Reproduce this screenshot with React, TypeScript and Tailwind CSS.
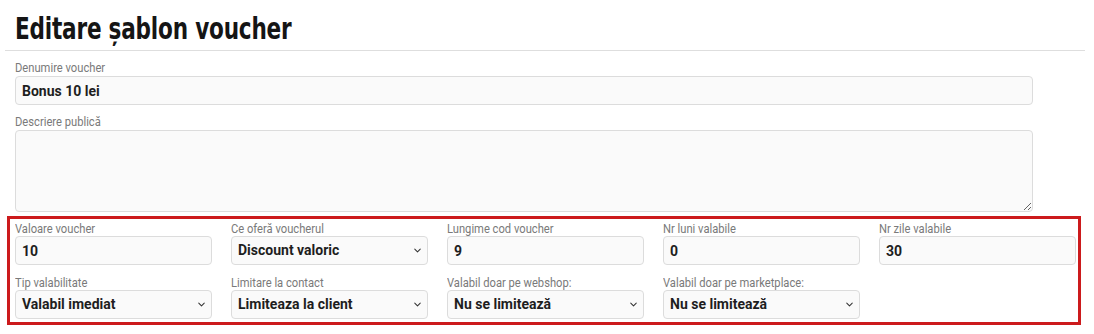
import { ChevronDown } from "lucide-react";

const labelCls =
  "inline-block origin-left scale-x-[0.86] whitespace-nowrap text-[13px] leading-[14px] font-normal text-[#7a7a7a] font-['Roboto','Liberation_Sans',sans-serif]";
const boxCls =
  "h-[29px] w-full rounded-[4px] border border-[#dcdcdc] bg-[#fafafa] px-[6px] text-[14px] font-bold text-[#1e1e1e] font-['Roboto','Liberation_Sans',sans-serif] outline-none";

const Label = ({ children }: { children: string }) => (
  <div className="h-[14px] leading-[14px]">
    <label className={labelCls}>{children}</label>
  </div>
);

const TextField = ({ label, value }: { label: string; value: string }) => (
  <div className="w-full">
    <Label>{label}</Label>
    <input readOnly value={value} className={`${boxCls} mt-[2px] block`} />
  </div>
);

const SelectField = ({ label, value }: { label: string; value: string }) => (
  <div className="w-full">
    <Label>{label}</Label>
    <div className={`${boxCls} mt-[2px] flex items-center justify-between pr-[4px]`}>
      <span>{value}</span>
      <ChevronDown size={11} strokeWidth={2.2} className="text-[#333]" />
    </div>
  </div>
);

export default function App() {
  return (
    <div className="bg-white w-[1094px] h-[334px] overflow-hidden">
      <div className="ml-[5px] w-[1080px] border-b border-[#dedede] pl-[10px] pt-[9px] pb-[1px]">
        <h1 className="h-[40px] leading-[40px] whitespace-nowrap">
          <span className="inline-block origin-left scale-x-[0.72] text-[30px] font-bold text-[#151515] font-['DejaVu_Sans',sans-serif] tracking-[-0.3px]">
            Editare șablon voucher
          </span>
        </h1>
      </div>

      <div className="ml-[15px] w-[1018px] pt-[8px] flex flex-col gap-[8px]">
        <div>
          <Label>Denumire voucher</Label>
          <input readOnly value="Bonus 10 lei" className={`${boxCls} mt-[3px] block`} />
        </div>
        <div>
          <Label>Descriere publică</Label>
          <textarea readOnly className="mt-[3px] block h-[82px] w-full rounded-[4px] border border-[#dcdcdc] bg-[#fafafa] outline-none" />
        </div>
      </div>

      {/* Highlighted block */}
      <div className="mt-[4px] ml-[7px] w-[1074px] h-[109px] border-[3px] border-[#cc1a1c] pl-[5px] pr-[2px] pt-[1px]">
        <div className="grid grid-cols-5 gap-x-[19px] gap-y-[9px]">
          <TextField label="Valoare voucher" value="10" />
          <SelectField label="Ce oferă voucherul" value="Discount valoric" />
          <TextField label="Lungime cod voucher" value="9" />
          <TextField label="Nr luni valabile" value="0" />
          <TextField label="Nr zile valabile" value="30" />
          <SelectField label="Tip valabilitate" value="Valabil imediat" />
          <SelectField label="Limitare la contact" value="Limiteaza la client" />
          <SelectField label="Valabil doar pe webshop:" value="Nu se limitează" />
          <SelectField label="Valabil doar pe marketplace:" value="Nu se limitează" />
        </div>
      </div>
    </div>
  );
}
